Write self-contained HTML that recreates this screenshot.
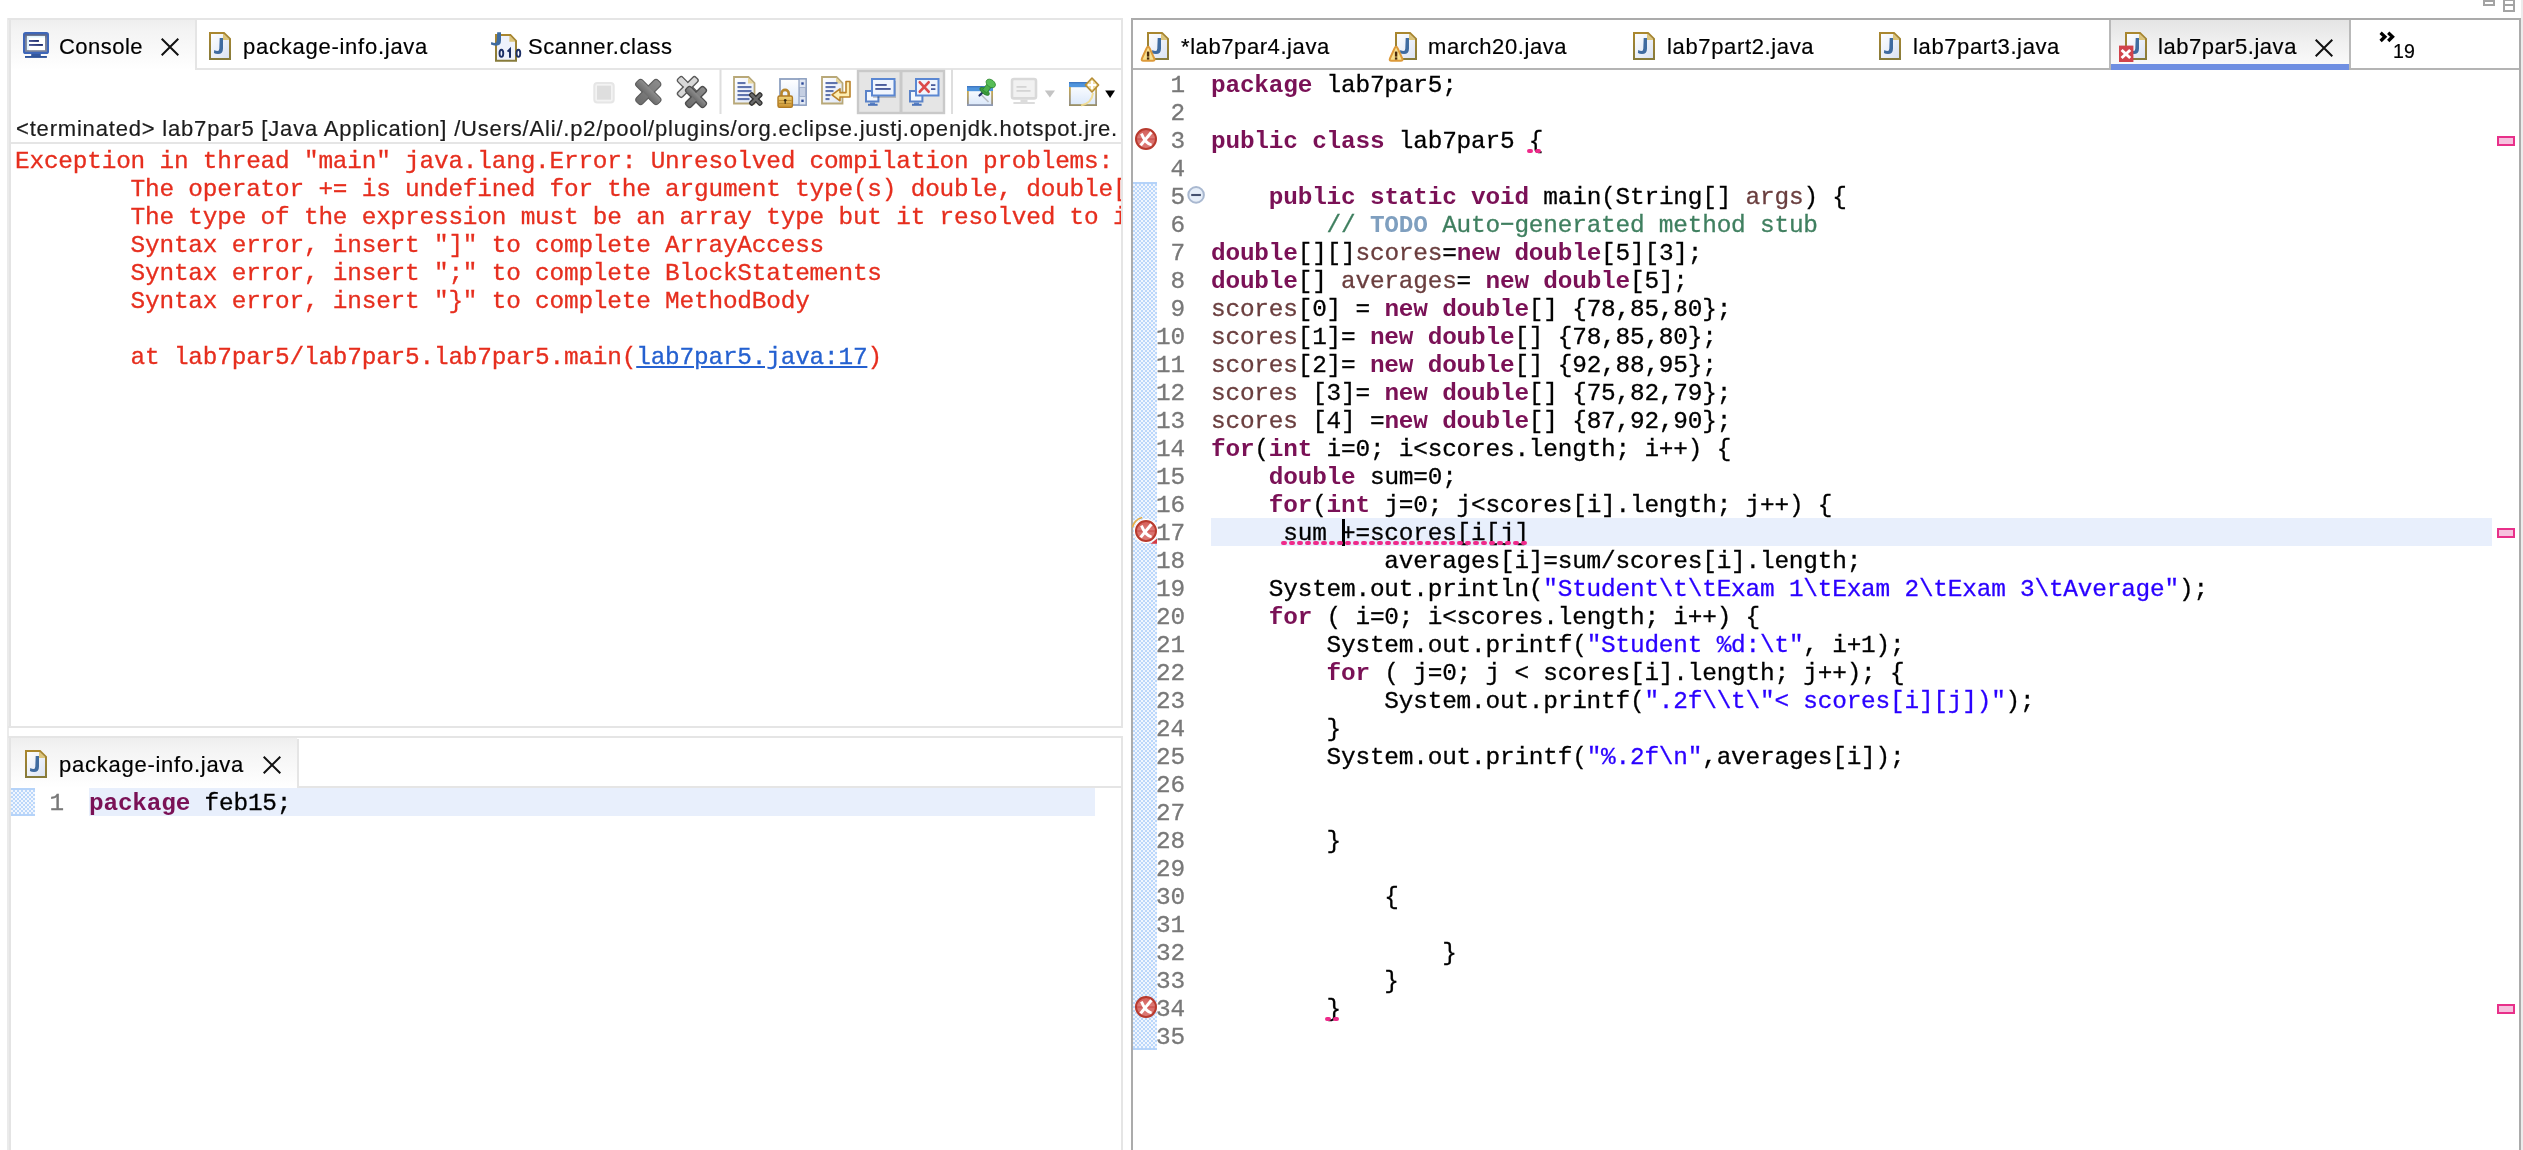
<!DOCTYPE html><html lang="en"><head><meta charset="utf-8"><title>Eclipse</title>
<style>
html,body{margin:0;padding:0;background:#fff;}
body{width:2523px;height:1150px;position:relative;overflow:hidden;font-family:"Liberation Sans",sans-serif;}
.ui,.mono{-webkit-font-smoothing:antialiased;will-change:transform;}
.ui{position:absolute;white-space:pre;font-family:"Liberation Sans",sans-serif;line-height:normal;-webkit-text-stroke:0.2px;}
.b{position:absolute;}
.mono{position:absolute;white-space:pre;font-family:"Liberation Mono",monospace;font-size:24.4px;letter-spacing:-0.19px;line-height:28px;height:28px;margin-top:2px;-webkit-text-stroke:0.3px;}
.k{color:#7a1156;font-weight:bold;-webkit-text-stroke:0;}
.v{color:#6a3e3e;}
.c{color:#3f7f5f;}
.t{color:#7f9fbf;font-weight:bold;-webkit-text-stroke:0;}
.s{color:#2a00ff;}
.ln{color:#787878;text-align:right;}
.con{color:#e62e1e;}
.lk{color:#2561d0;text-decoration:underline;}
</style></head><body>

<div class="b" style="left:7px;top:18px;width:2px;height:1132px;background:#ebebeb"></div>
<div class="b" style="left:9px;top:18px;width:2px;height:710px;background:#e4e4e4"></div>
<div class="b" style="left:9px;top:736px;width:2px;height:414px;background:#e4e4e4"></div>
<div class="b" style="left:8px;top:18px;width:1115px;height:2px;background:#e5e5e5"></div>
<div class="b" style="left:1121px;top:18px;width:2px;height:710px;background:#e5e5e5"></div>
<div class="b" style="left:8px;top:726px;width:1115px;height:2px;background:#e5e5e5"></div>
<div class="b" style="left:11px;top:20px;width:184px;height:50px;background:linear-gradient(180deg,#eeeeee 0%,#f3f3f3 18%,#f9f9f9 60%,#ffffff 100%)"></div>
<div class="b" style="left:195px;top:20px;width:2px;height:50px;background:#e5e5e5"></div>
<div class="b" style="left:195px;top:68px;width:926px;height:2px;background:#e5e5e5"></div>
<div class="b" style="left:11px;top:142px;width:1110px;height:2px;background:#e5e5e5"></div>
<div class="b" style="left:8px;top:736px;width:1115px;height:2px;background:#e5e5e5"></div>
<div class="b" style="left:1121px;top:736px;width:2px;height:414px;background:#e5e5e5"></div>
<div class="b" style="left:11px;top:738px;width:286px;height:50px;background:linear-gradient(180deg,#eeeeee 0%,#f3f3f3 18%,#f9f9f9 60%,#ffffff 100%)"></div>
<div class="b" style="left:297px;top:739px;width:2px;height:48px;background:#e5e5e5"></div>
<div class="b" style="left:297px;top:786px;width:824px;height:2px;background:#e5e5e5"></div>
<div class="b" style="left:1131px;top:18px;width:2px;height:1132px;background:#ababab"></div>
<div class="b" style="left:1131px;top:18px;width:1390px;height:2px;background:#ababab"></div>
<div class="b" style="left:2519px;top:18px;width:2px;height:1132px;background:#ababab"></div>
<div class="b" style="left:1133px;top:68px;width:1386px;height:2px;background:#b4b4b4"></div>
<div class="b" style="left:2109px;top:20px;width:242px;height:48px;background:linear-gradient(180deg,#e4e4e4 0%,#f1f1f1 50%,#fbfbfb 100%);border-left:2px solid #b9b9b9;border-right:2px solid #b9b9b9;box-sizing:border-box"></div>
<div class="b" style="left:2111px;top:64px;width:238px;height:6px;background:#6f8fe2"></div>
<div class="b" style="left:2483px;top:-0.4px;width:12px;height:6px;border:2px solid #a3a3a3;box-sizing:border-box;background:#fff"></div>
<div class="b" style="left:2503px;top:-0.6px;width:12px;height:12.4px;border:2px solid #a3a3a3;box-sizing:border-box;background:#fff"></div>
<div class="b" style="left:2503px;top:3.6px;width:12px;height:2px;background:#a3a3a3"></div>
<div class="b" style="left:2521px;top:0;width:2px;height:1150px;background:#ececec"></div>
<svg style="position:absolute;left:23px;top:32px" width="27" height="27" viewBox="0 0 27 27">
<defs><linearGradient id="cl" x1="0" y1="0" x2="1" y2="0"><stop offset="0" stop-color="#4a5596"/><stop offset="1" stop-color="#1c2a6a"/></linearGradient>
<linearGradient id="cb" x1="0" y1="0" x2="0" y2="1"><stop offset="0" stop-color="#5d6582"/><stop offset="0.25" stop-color="#7b8296"/><stop offset="1" stop-color="#7f869a"/></linearGradient></defs>
<rect x="0" y="0" width="26" height="22" rx="2.6" fill="#3e66b8"/>
<rect x="2.1" y="2.3" width="21.8" height="17.5" fill="url(#cb)"/>
<rect x="3.9" y="3.9" width="18.1" height="14.2" fill="#dff4ff"/>
<rect x="5.7" y="5.5" width="16.3" height="12.6" fill="#ffffff"/>
<rect x="6" y="8" width="9.9" height="1.9" fill="url(#cl)"/><rect x="6" y="12" width="13.9" height="1.9" fill="url(#cl)"/>
<rect x="8.2" y="21.9" width="9.6" height="2.2" fill="#35589e"/><rect x="2" y="24" width="21.9" height="1.9" fill="#2d5299"/>
</svg>
<div class="ui" style="left:58.8px;top:33.59px;font-size:22px;letter-spacing:0.47px;color:#000;">Console</div>
<svg style="position:absolute;left:161px;top:38px" width="18" height="18" viewBox="0 0 18 18"><path d="M0.7 0.7 L17.3 17.3 M17.3 0.7 L0.7 17.3" stroke="#111" stroke-width="2" fill="none"/></svg>
<svg style="position:absolute;left:209px;top:32px;overflow:visible" width="22" height="28" viewBox="0 0 22 28">
<defs><linearGradient id="jg" x1="0" y1="0" x2="1" y2="1"><stop offset="0" stop-color="#ffffff"/><stop offset="1" stop-color="#d9e2f3"/></linearGradient><linearGradient id="jb" x1="0" y1="0" x2="0" y2="1"><stop offset="0" stop-color="#aa872f"/><stop offset="1" stop-color="#877b3b"/></linearGradient></defs>
<path d="M1 1 H15 L21 6.8 V27 H1 Z" fill="url(#jg)" stroke="url(#jb)" stroke-width="2" stroke-linejoin="miter"/>
<path d="M14 2 V8 H20 V7.2 L14.6 2 Z" fill="#dcc47a" stroke="none"/>
<path d="M10.7 6 H14 V16.4 Q14 21.9 9 21.9 Q6.5 21.9 4.9 21 L5.3 18.1 Q7 19 8.5 19 Q10.3 19 10.3 16.4 Z" fill="#3f6ba0"/>
</svg>
<div class="ui" style="left:242.8px;top:33.59px;font-size:22px;letter-spacing:0.744px;color:#000;">package-info.java</div>
<svg style="position:absolute;left:491px;top:30px;overflow:visible" width="32" height="32" viewBox="0 0 32 32">
<path d="M5 5 H19.4 L25 10.8 V30.8 H5 Z" fill="#eef2fb" stroke="url(#jb)" stroke-width="2"/>
<path d="M18.4 6 V11.8 H24 V11.2 L19 6 Z" fill="#dcc47a"/>
<path d="M6.2 2.2 H10 V10.5 Q10 15.7 5 15.7 Q2 15.7 -0.1 14.6 L0.3 11.9 Q2.4 12.9 4.2 12.9 Q5.7 12.9 5.7 10.5 Z" fill="#3f6ba0"/>
<ellipse cx="10.4" cy="23.3" rx="1.85" ry="3.55" fill="none" stroke="#1c2f66" stroke-width="1.9"/><ellipse cx="27.4" cy="23.3" rx="1.85" ry="3.55" fill="none" stroke="#1c2f66" stroke-width="1.9"/><path d="M16.6 21.6 L19 19.2 V27.7" fill="none" stroke="#1c2f66" stroke-width="2"/>
</svg>
<div class="ui" style="left:528.3px;top:33.59px;font-size:22px;letter-spacing:0.587px;color:#000;">Scanner.class</div>
<svg style="position:absolute;left:580px;top:66px;overflow:visible" width="545" height="52" viewBox="0 0 545 52"><defs>
<linearGradient id="docg" x1="0" y1="0" x2="1" y2="1"><stop offset="0" stop-color="#ffffff"/><stop offset="1" stop-color="#dfe7f6"/></linearGradient>
<linearGradient id="wing" x1="0" y1="0" x2="0" y2="1"><stop offset="0" stop-color="#ffffff"/><stop offset="1" stop-color="#dbe8fa"/></linearGradient>
<linearGradient id="goldside" x1="0" y1="0" x2="0" y2="1"><stop offset="0" stop-color="#c9a94e"/><stop offset="1" stop-color="#8d8f96"/></linearGradient>
<linearGradient id="lockg" x1="0" y1="0" x2="0" y2="1"><stop offset="0" stop-color="#f3d67a"/><stop offset="1" stop-color="#c98f2d"/></linearGradient>
<linearGradient id="xg" x1="0" y1="0" x2="0" y2="1"><stop offset="0" stop-color="#8c8c8c"/><stop offset="1" stop-color="#6c6c6c"/></linearGradient>
</defs><rect x="14.299999999999955" y="17" width="19.4" height="19.4" fill="#f3f3f3" stroke="#e6e6e6" stroke-width="2" rx="3" /><rect x="17" y="19.700000000000003" width="14" height="14" fill="#dedede" /><g transform="translate(68.29999999999995,26) rotate(45)"><rect x="-15.2" y="-4.3" width="30.4" height="8.6" rx="3.01" fill="url(#xg)" stroke="#5e5e5e" stroke-width="1.2"/><rect x="-4.3" y="-15.2" width="8.6" height="30.4" rx="3.01" fill="url(#xg)" stroke="#5e5e5e" stroke-width="1.2"/><rect x="-14.6" y="-3.6999999999999997" width="29.2" height="7.3999999999999995" rx="2.5799999999999996" fill="url(#xg)"/></g><g transform="translate(107.79999999999995,21) rotate(45)"><rect x="-12.6" y="-3.3" width="25.2" height="6.6" rx="2.3099999999999996" fill="#d8d8d8" stroke="#5a5a5a" stroke-width="1.4"/><rect x="-3.3" y="-12.6" width="6.6" height="25.2" rx="2.3099999999999996" fill="#d8d8d8" stroke="#5a5a5a" stroke-width="1.4"/><rect x="-11.9" y="-2.5999999999999996" width="23.8" height="5.199999999999999" rx="1.9799999999999998" fill="#d8d8d8"/></g><g transform="translate(116,31) rotate(45)"><rect x="-12.6" y="-3.4" width="25.2" height="6.8" rx="2.38" fill="url(#xg)" stroke="#4e4e4e" stroke-width="1.4"/><rect x="-3.4" y="-12.6" width="6.8" height="25.2" rx="2.38" fill="url(#xg)" stroke="#4e4e4e" stroke-width="1.4"/><rect x="-11.9" y="-2.7" width="23.8" height="5.4" rx="2.04" fill="url(#xg)"/></g><rect x="139.5" y="3.5" width="2" height="44.5" fill="#dedede" /><rect x="371" y="3.5" width="2" height="44.5" fill="#dedede" /><path d="M154 11 h14.5 l6 6 v20.5 h-20.5 z" fill="url(#docg)" stroke="#b8a878" stroke-width="1.8"/><path d="M168 11.5 v6 h6 z" fill="#e6d59a"/><rect x="157.5" y="16" width="8" height="2.1" fill="#5f74ad" /><rect x="157.5" y="20" width="14" height="2.1" fill="#5f74ad" /><rect x="157.5" y="24" width="14" height="2.1" fill="#5f74ad" /><rect x="157.5" y="28" width="14" height="2.1" fill="#5f74ad" /><rect x="157.5" y="32" width="12" height="2.1" fill="#5f74ad" /><g transform="translate(175.79999999999995,33) rotate(45)"><rect x="-7.6" y="-1.9" width="15.2" height="3.8" rx="1.3299999999999998" fill="#6a6a6a" stroke="#333" stroke-width="1.4"/><rect x="-1.9" y="-7.6" width="3.8" height="15.2" rx="1.3299999999999998" fill="#6a6a6a" stroke="#333" stroke-width="1.4"/><rect x="-6.8999999999999995" y="-1.2" width="13.799999999999999" height="2.4" rx="1.14" fill="#6a6a6a"/></g><rect x="200" y="13" width="26" height="26" fill="url(#wing)" stroke="#8ea0c0" stroke-width="1.8" /><rect x="219" y="13" width="7" height="26" fill="#dfe6f2" stroke="#8ea0c0" stroke-width="1.2" /><rect x="219.60000000000002" y="21.5" width="5.8" height="9" fill="#c5cfe2" stroke="#9aa8c4" stroke-width="0.8" /><rect x="221.29999999999995" y="16.299999999999997" width="2.4" height="2.4" fill="#2d4a9a" /><rect x="221.29999999999995" y="33.599999999999994" width="2.4" height="2.4" fill="#2d4a9a" /><path d="M201.5 30 v-2.5 a3.6 3.6 0 0 1 7.2 0 v2.5" fill="none" stroke="#b8862c" stroke-width="2.6"/><rect x="198" y="30" width="14.4" height="11.4" fill="url(#lockg)" stroke="#b07a22" stroke-width="1.4" rx="1.6" /><rect x="198.79999999999995" y="34" width="12.8" height="0.9" fill="#b98a30" /><rect x="198.79999999999995" y="37" width="12.8" height="0.9" fill="#b98a30" /><circle cx="205.20000000000005" cy="34.2" r="1.3" fill="#3a2a10"/><rect x="204.60000000000002" y="34.2" width="1.2" height="3.6" fill="#3a2a10" /><path d="M242 11 h14.5 l6 6 v20.5 h-20.5 z" fill="url(#docg)" stroke="#b8a878" stroke-width="1.8"/><path d="M256 11.5 v6 h6 z" fill="#e6d59a"/><rect x="245.5" y="16" width="12" height="2.1" fill="#5f74ad" /><rect x="245.5" y="20" width="10" height="2.1" fill="#5f74ad" /><rect x="245.5" y="24" width="8" height="2.1" fill="#5f74ad" /><rect x="245.5" y="28" width="5" height="2.1" fill="#5f74ad" /><rect x="245.5" y="32" width="4" height="2.1" fill="#5f74ad" /><path d="M266 15.5 h4 v15.5 h-10 v3.8 l-8 -6 l8 -6 v3.8 h6 v-11.1 z" fill="#fdeeb4" stroke="#b9822a" stroke-width="1.6" stroke-linejoin="round"/><rect x="278" y="5" width="86" height="42" fill="#e5e5e5" stroke="#c9c9c9" stroke-width="2.4" /><rect x="319.5" y="5" width="3" height="42" fill="#c9c9c9" /><rect x="286" y="25" width="12.4" height="10.5" fill="#f3f7fd" stroke="#5b83c8" stroke-width="2" /><rect x="290" y="36.5" width="5" height="1.6" fill="#5b83c8" /><rect x="288" y="37.8" width="9.6" height="2" fill="#4c74ba" /><rect x="293" y="15" width="23" height="17" fill="#000" opacity="0.18" filter="url(#bl)"/><rect x="292" y="13" width="22.5" height="16.5" fill="#f0f5fd" stroke="#5b87d2" stroke-width="2" /><rect x="295.29999999999995" y="18" width="11.4" height="1.9" fill="#4a5c9c" /><rect x="295.29999999999995" y="22" width="15.4" height="1.9" fill="#4a5c9c" /><rect x="330" y="25" width="12.4" height="10.5" fill="#f3f7fd" stroke="#5b83c8" stroke-width="2" /><rect x="334" y="36.5" width="5" height="1.6" fill="#5b83c8" /><rect x="332" y="37.8" width="9.6" height="2" fill="#4c74ba" /><rect x="336" y="13" width="22.5" height="16.5" fill="#f0f5fd" stroke="#5b87d2" stroke-width="2" /><path d="M339.79999999999995 16.299999999999997 l8.8 9.4 m0 -9.4 l-8.8 9.4" stroke="#dc4a4a" stroke-width="2.7" stroke-linecap="round"/><rect x="351" y="18.200000000000003" width="4.4" height="1.8" fill="#4a5c9c" /><rect x="351" y="22.200000000000003" width="4.4" height="1.8" fill="#4a5c9c" /><rect x="388" y="21" width="24" height="18" fill="url(#wing)" stroke="none" stroke-width="0" /><rect x="387" y="20" width="26" height="5.2" fill="#4f94dc" /><rect x="387" y="20" width="26" height="1.4" fill="#3f78c2" /><rect x="387" y="25" width="1.8" height="15" fill="url(#goldside)" /><rect x="411.20000000000005" y="25" width="1.8" height="15" fill="url(#goldside)" /><rect x="387" y="38.2" width="26" height="1.8" fill="#8f9bb5" /><path d="M400.5 28 l8 8" stroke="#b9bcc4" stroke-width="1.6"/><path d="M399.5 29.5 l4 -4" stroke="#1f2f6e" stroke-width="2.2" stroke-linecap="round"/><g transform="translate(408,21) rotate(38)"><ellipse cx="0" cy="5.5" rx="5.6" ry="2.6" fill="#3c9a3c" stroke="#2c7a2c" stroke-width="0.8"/><rect x="-2.6" y="-3.5" width="5.2" height="9" fill="#4bb04b" stroke="#2f8a2f" stroke-width="0.8"/><ellipse cx="0" cy="-4.5" rx="5.2" ry="3.6" fill="#57bd57" stroke="#2f8a2f" stroke-width="0.8"/></g><rect x="432" y="13" width="24" height="19.4" fill="#f1f1f1" stroke="#d9d9d9" stroke-width="2.6" rx="2" /><rect x="436.5" y="20" width="10" height="1.8" fill="#d4d4d4" /><rect x="436.5" y="24" width="14" height="1.8" fill="#d4d4d4" /><rect x="440.5" y="33.5" width="7" height="2.5" fill="#dcdcdc" /><rect x="433.4" y="36" width="21.4" height="2" fill="#dcdcdc" /><path d="M464.79999999999995 24.400000000000006 h10.2 l-5.1 7.2 z" fill="#c4c4c4"/><rect x="490" y="17" width="26" height="22" fill="url(#wing)" stroke="none" stroke-width="0" /><rect x="489" y="16" width="28" height="5.2" fill="#4f94dc" /><rect x="489" y="16" width="28" height="1.4" fill="#3f78c2" /><rect x="489" y="21" width="1.8" height="19" fill="url(#goldside)" /><rect x="515.2" y="21" width="1.8" height="19" fill="url(#goldside)" /><rect x="489" y="38.2" width="28" height="1.8" fill="#9a8f66" /><path d="M513 27 q-1 10 -12 12.5" fill="none" stroke="#f3dc8c" stroke-width="2" opacity="0.9"/><path d="M512 12 l6.6 7 l-6.6 7 l-6.6 -7 z" fill="#f1dea4" stroke="#b58c32" stroke-width="1.6" stroke-linejoin="round"/><path d="M512 15 v8 m-4 -4 h8" stroke="#fff" stroke-width="2"/><path d="M525.2 24.400000000000006 h9.8 l-4.9 7.6 z" fill="#000"/></svg>
<div class="ui" style="left:15.5px;top:116.09px;font-size:22px;letter-spacing:0.813px;color:#1c1c1c;width:1104px;overflow:hidden;">&lt;terminated&gt; lab7par5 [Java Application] /Users/Ali/.p2/pool/plugins/org.eclipse.justj.openjdk.hotspot.jre.</div>
<div class="b" style="left:11px;top:144px;width:1110px;height:582px;overflow:hidden">
<div class="mono con" style="left:4px;top:2px">Exception in thread "main" java.lang.Error: Unresolved compilation problems: </div>
<div class="mono con" style="left:4px;top:30px">        The operator += is undefined for the argument type(s) double, double[]</div>
<div class="mono con" style="left:4px;top:58px">        The type of the expression must be an array type but it resolved to int</div>
<div class="mono con" style="left:4px;top:86px">        Syntax error, insert "]" to complete ArrayAccess</div>
<div class="mono con" style="left:4px;top:114px">        Syntax error, insert ";" to complete BlockStatements</div>
<div class="mono con" style="left:4px;top:142px">        Syntax error, insert "}" to complete MethodBody</div>
<div class="mono con" style="left:4px;top:170px"></div>
<div class="mono con" style="left:4px;top:198px">        at lab7par5/lab7par5.lab7par5.main(<span class="lk">lab7par5.java:17</span>)</div>
</div>
<svg style="position:absolute;left:25px;top:750px;overflow:visible" width="22" height="28" viewBox="0 0 22 28">
<defs><linearGradient id="jg" x1="0" y1="0" x2="1" y2="1"><stop offset="0" stop-color="#ffffff"/><stop offset="1" stop-color="#d9e2f3"/></linearGradient><linearGradient id="jb" x1="0" y1="0" x2="0" y2="1"><stop offset="0" stop-color="#aa872f"/><stop offset="1" stop-color="#877b3b"/></linearGradient></defs>
<path d="M1 1 H15 L21 6.8 V27 H1 Z" fill="url(#jg)" stroke="url(#jb)" stroke-width="2" stroke-linejoin="miter"/>
<path d="M14 2 V8 H20 V7.2 L14.6 2 Z" fill="#dcc47a" stroke="none"/>
<path d="M10.7 6 H14 V16.4 Q14 21.9 9 21.9 Q6.5 21.9 4.9 21 L5.3 18.1 Q7 19 8.5 19 Q10.3 19 10.3 16.4 Z" fill="#3f6ba0"/>
</svg>
<div class="ui" style="left:58.8px;top:751.89px;font-size:22px;letter-spacing:0.744px;color:#000;">package-info.java</div>
<svg style="position:absolute;left:263px;top:756px" width="18" height="18" viewBox="0 0 18 18"><path d="M0.7 0.7 L17.3 17.3 M17.3 0.7 L0.7 17.3" stroke="#111" stroke-width="2" fill="none"/></svg>
<div class="b" style="left:89px;top:788px;width:1006px;height:28px;background:#e8effc"></div>
<div class="b qd" style="left:11px;top:788px;width:24px;height:28px"></div><div class="b" style="left:11px;top:814px;width:24px;height:2px;background:#b5d3f9"></div><div class="b" style="left:11px;top:788px;width:24px;height:2px;background:#b5d3f9"></div>
<div class="mono ln" style="left:20px;top:788px;width:44px">1</div>
<div class="mono" style="left:89px;top:788px"><span class="k">package</span> feb15;</div>
<svg style="position:absolute;left:1147px;top:32px;overflow:visible" width="22" height="28" viewBox="0 0 22 28">
<defs><linearGradient id="jg" x1="0" y1="0" x2="1" y2="1"><stop offset="0" stop-color="#ffffff"/><stop offset="1" stop-color="#d9e2f3"/></linearGradient><linearGradient id="jb" x1="0" y1="0" x2="0" y2="1"><stop offset="0" stop-color="#aa872f"/><stop offset="1" stop-color="#877b3b"/></linearGradient></defs>
<path d="M1 1 H15 L21 6.8 V27 H1 Z" fill="url(#jg)" stroke="url(#jb)" stroke-width="2" stroke-linejoin="miter"/>
<path d="M14 2 V8 H20 V7.2 L14.6 2 Z" fill="#dcc47a" stroke="none"/>
<path d="M10.7 6 H14 V16.4 Q14 21.9 9 21.9 Q6.5 21.9 4.9 21 L5.3 18.1 Q7 19 8.5 19 Q10.3 19 10.3 16.4 Z" fill="#3f6ba0"/>
<path d="M-0.6 16.6 Q1.1 13 2.8 16.6 L7.2 26.4 Q8.2 28.8 5.8 28.8 L-3.6 28.8 Q-6 28.8 -5 26.4 Z" fill="#f8e08e" stroke="#dd9a3a" stroke-width="2" stroke-linejoin="round"/>
<rect x="-0.1" y="19.6" width="2.4" height="5" fill="#4a2a0a"/><rect x="-0.1" y="25.4" width="2.4" height="2.2" fill="#4a2a0a"/></svg>
<div class="ui" style="left:1180.8px;top:33.59px;font-size:22px;letter-spacing:0.581px;color:#000;">*lab7par4.java</div>
<svg style="position:absolute;left:1395px;top:32px;overflow:visible" width="22" height="28" viewBox="0 0 22 28">
<defs><linearGradient id="jg" x1="0" y1="0" x2="1" y2="1"><stop offset="0" stop-color="#ffffff"/><stop offset="1" stop-color="#d9e2f3"/></linearGradient><linearGradient id="jb" x1="0" y1="0" x2="0" y2="1"><stop offset="0" stop-color="#aa872f"/><stop offset="1" stop-color="#877b3b"/></linearGradient></defs>
<path d="M1 1 H15 L21 6.8 V27 H1 Z" fill="url(#jg)" stroke="url(#jb)" stroke-width="2" stroke-linejoin="miter"/>
<path d="M14 2 V8 H20 V7.2 L14.6 2 Z" fill="#dcc47a" stroke="none"/>
<path d="M10.7 6 H14 V16.4 Q14 21.9 9 21.9 Q6.5 21.9 4.9 21 L5.3 18.1 Q7 19 8.5 19 Q10.3 19 10.3 16.4 Z" fill="#3f6ba0"/>
<path d="M-0.6 16.6 Q1.1 13 2.8 16.6 L7.2 26.4 Q8.2 28.8 5.8 28.8 L-3.6 28.8 Q-6 28.8 -5 26.4 Z" fill="#f8e08e" stroke="#dd9a3a" stroke-width="2" stroke-linejoin="round"/>
<rect x="-0.1" y="19.6" width="2.4" height="5" fill="#4a2a0a"/><rect x="-0.1" y="25.4" width="2.4" height="2.2" fill="#4a2a0a"/></svg>
<div class="ui" style="left:1428.3px;top:33.59px;font-size:22px;letter-spacing:0.593px;color:#000;">march20.java</div>
<svg style="position:absolute;left:1633px;top:32px;overflow:visible" width="22" height="28" viewBox="0 0 22 28">
<defs><linearGradient id="jg" x1="0" y1="0" x2="1" y2="1"><stop offset="0" stop-color="#ffffff"/><stop offset="1" stop-color="#d9e2f3"/></linearGradient><linearGradient id="jb" x1="0" y1="0" x2="0" y2="1"><stop offset="0" stop-color="#aa872f"/><stop offset="1" stop-color="#877b3b"/></linearGradient></defs>
<path d="M1 1 H15 L21 6.8 V27 H1 Z" fill="url(#jg)" stroke="url(#jb)" stroke-width="2" stroke-linejoin="miter"/>
<path d="M14 2 V8 H20 V7.2 L14.6 2 Z" fill="#dcc47a" stroke="none"/>
<path d="M10.7 6 H14 V16.4 Q14 21.9 9 21.9 Q6.5 21.9 4.9 21 L5.3 18.1 Q7 19 8.5 19 Q10.3 19 10.3 16.4 Z" fill="#3f6ba0"/>
</svg>
<div class="ui" style="left:1666.6px;top:33.59px;font-size:22px;letter-spacing:0.642px;color:#000;">lab7part2.java</div>
<svg style="position:absolute;left:1879px;top:32px;overflow:visible" width="22" height="28" viewBox="0 0 22 28">
<defs><linearGradient id="jg" x1="0" y1="0" x2="1" y2="1"><stop offset="0" stop-color="#ffffff"/><stop offset="1" stop-color="#d9e2f3"/></linearGradient><linearGradient id="jb" x1="0" y1="0" x2="0" y2="1"><stop offset="0" stop-color="#aa872f"/><stop offset="1" stop-color="#877b3b"/></linearGradient></defs>
<path d="M1 1 H15 L21 6.8 V27 H1 Z" fill="url(#jg)" stroke="url(#jb)" stroke-width="2" stroke-linejoin="miter"/>
<path d="M14 2 V8 H20 V7.2 L14.6 2 Z" fill="#dcc47a" stroke="none"/>
<path d="M10.7 6 H14 V16.4 Q14 21.9 9 21.9 Q6.5 21.9 4.9 21 L5.3 18.1 Q7 19 8.5 19 Q10.3 19 10.3 16.4 Z" fill="#3f6ba0"/>
</svg>
<div class="ui" style="left:1913.0px;top:33.59px;font-size:22px;letter-spacing:0.627px;color:#000;">lab7part3.java</div>
<svg style="position:absolute;left:2125px;top:32px;overflow:visible" width="22" height="28" viewBox="0 0 22 28">
<defs><linearGradient id="jg" x1="0" y1="0" x2="1" y2="1"><stop offset="0" stop-color="#ffffff"/><stop offset="1" stop-color="#d9e2f3"/></linearGradient><linearGradient id="jb" x1="0" y1="0" x2="0" y2="1"><stop offset="0" stop-color="#aa872f"/><stop offset="1" stop-color="#877b3b"/></linearGradient></defs>
<path d="M1 1 H15 L21 6.8 V27 H1 Z" fill="url(#jg)" stroke="url(#jb)" stroke-width="2" stroke-linejoin="miter"/>
<path d="M14 2 V8 H20 V7.2 L14.6 2 Z" fill="#dcc47a" stroke="none"/>
<path d="M10.7 6 H14 V16.4 Q14 21.9 9 21.9 Q6.5 21.9 4.9 21 L5.3 18.1 Q7 19 8.5 19 Q10.3 19 10.3 16.4 Z" fill="#3f6ba0"/>
<rect x="-6" y="13.6" width="14.4" height="16.4" fill="#d1434b"/><path d="M-3.4 18 L5.2 26 M5.2 18 L-3.4 26" stroke="#fff" stroke-width="3"/></svg>
<div class="ui" style="left:2158.3px;top:33.59px;font-size:22px;letter-spacing:0.522px;color:#000;">lab7par5.java</div>
<svg style="position:absolute;left:2315px;top:39px" width="18" height="18" viewBox="0 0 18 18"><path d="M0.7 0.7 L17.3 17.3 M17.3 0.7 L0.7 17.3" stroke="#111" stroke-width="2" fill="none"/></svg>
<svg style="position:absolute;left:2378px;top:30px" width="20" height="14" viewBox="0 0 20 14"><path d="M2.6 2.8 L6.9 6.8 L2.6 11 M10.2 2.8 L14.5 6.8 L10.2 11" fill="none" stroke="#000" stroke-width="3.3" stroke-linejoin="miter"/></svg>
<div class="ui" style="left:2393px;top:40.06px;font-size:19.6px;letter-spacing:0px;color:#000;">19</div>
<div class="b qd" style="left:1133px;top:182px;width:24px;height:868px"></div>
<div class="b" style="left:1133px;top:1048px;width:24px;height:2px;background:#b5d3f9"></div>
<div class="b" style="left:1133px;top:182px;width:24px;height:2px;background:#b5d3f9"></div>
<div class="b" style="left:1211px;top:518px;width:1281px;height:28px;background:#e8effc"></div>
<div class="mono ln" style="left:1140px;top:70px;width:45px">1</div>
<div class="mono" style="left:1211px;top:70px"><span class="k">package</span> lab7par5;</div>
<div class="mono ln" style="left:1140px;top:98px;width:45px">2</div>
<div class="mono ln" style="left:1140px;top:126px;width:45px">3</div>
<div class="mono" style="left:1211px;top:126px"><span class="k">public</span> <span class="k">class</span> lab7par5 {</div>
<div class="mono ln" style="left:1140px;top:154px;width:45px">4</div>
<div class="mono ln" style="left:1140px;top:182px;width:45px">5</div>
<div class="mono" style="left:1211px;top:182px">    <span class="k">public</span> <span class="k">static</span> <span class="k">void</span> main(String[] <span class="v">args</span>) {</div>
<div class="mono ln" style="left:1140px;top:210px;width:45px">6</div>
<div class="mono" style="left:1211px;top:210px">        <span class="c">// </span><span class="t">TODO</span><span class="c"> Auto−generated method stub</span></div>
<div class="mono ln" style="left:1140px;top:238px;width:45px">7</div>
<div class="mono" style="left:1211px;top:238px"><span class="k">double</span>[][]<span class="v">scores</span>=<span class="k">new</span> <span class="k">double</span>[5][3];</div>
<div class="mono ln" style="left:1140px;top:266px;width:45px">8</div>
<div class="mono" style="left:1211px;top:266px"><span class="k">double</span>[] <span class="v">averages</span>= <span class="k">new</span> <span class="k">double</span>[5];</div>
<div class="mono ln" style="left:1140px;top:294px;width:45px">9</div>
<div class="mono" style="left:1211px;top:294px"><span class="v">scores</span>[0] = <span class="k">new</span> <span class="k">double</span>[] {78,85,80};</div>
<div class="mono ln" style="left:1140px;top:322px;width:45px">10</div>
<div class="mono" style="left:1211px;top:322px"><span class="v">scores</span>[1]= <span class="k">new</span> <span class="k">double</span>[] {78,85,80};</div>
<div class="mono ln" style="left:1140px;top:350px;width:45px">11</div>
<div class="mono" style="left:1211px;top:350px"><span class="v">scores</span>[2]= <span class="k">new</span> <span class="k">double</span>[] {92,88,95};</div>
<div class="mono ln" style="left:1140px;top:378px;width:45px">12</div>
<div class="mono" style="left:1211px;top:378px"><span class="v">scores</span> [3]= <span class="k">new</span> <span class="k">double</span>[] {75,82,79};</div>
<div class="mono ln" style="left:1140px;top:406px;width:45px">13</div>
<div class="mono" style="left:1211px;top:406px"><span class="v">scores</span> [4] =<span class="k">new</span> <span class="k">double</span>[] {87,92,90};</div>
<div class="mono ln" style="left:1140px;top:434px;width:45px">14</div>
<div class="mono" style="left:1211px;top:434px"><span class="k">for</span>(<span class="k">int</span> i=0; i&lt;scores.length; i++) {</div>
<div class="mono ln" style="left:1140px;top:462px;width:45px">15</div>
<div class="mono" style="left:1211px;top:462px">    <span class="k">double</span> sum=0;</div>
<div class="mono ln" style="left:1140px;top:490px;width:45px">16</div>
<div class="mono" style="left:1211px;top:490px">    <span class="k">for</span>(<span class="k">int</span> j=0; j&lt;scores[i].length; j++) {</div>
<div class="mono ln" style="left:1140px;top:518px;width:45px">17</div>
<div class="mono" style="left:1211px;top:518px">     sum +=scores[i[j]</div>
<div class="mono ln" style="left:1140px;top:546px;width:45px">18</div>
<div class="mono" style="left:1211px;top:546px">            averages[i]=sum/scores[i].length;</div>
<div class="mono ln" style="left:1140px;top:574px;width:45px">19</div>
<div class="mono" style="left:1211px;top:574px">    System.out.println(<span class="s">"Student\t\tExam 1\tExam 2\tExam 3\tAverage"</span>);</div>
<div class="mono ln" style="left:1140px;top:602px;width:45px">20</div>
<div class="mono" style="left:1211px;top:602px">    <span class="k">for</span> ( i=0; i&lt;scores.length; i++) {</div>
<div class="mono ln" style="left:1140px;top:630px;width:45px">21</div>
<div class="mono" style="left:1211px;top:630px">        System.out.printf(<span class="s">"Student %d:\t"</span>, i+1);</div>
<div class="mono ln" style="left:1140px;top:658px;width:45px">22</div>
<div class="mono" style="left:1211px;top:658px">        <span class="k">for</span> ( j=0; j &lt; scores[i].length; j++); {</div>
<div class="mono ln" style="left:1140px;top:686px;width:45px">23</div>
<div class="mono" style="left:1211px;top:686px">            System.out.printf(<span class="s">".2f\\t\"&lt; scores[i][j])"</span>);</div>
<div class="mono ln" style="left:1140px;top:714px;width:45px">24</div>
<div class="mono" style="left:1211px;top:714px">        }</div>
<div class="mono ln" style="left:1140px;top:742px;width:45px">25</div>
<div class="mono" style="left:1211px;top:742px">        System.out.printf(<span class="s">"%.2f\n"</span>,averages[i]);</div>
<div class="mono ln" style="left:1140px;top:770px;width:45px">26</div>
<div class="mono ln" style="left:1140px;top:798px;width:45px">27</div>
<div class="mono ln" style="left:1140px;top:826px;width:45px">28</div>
<div class="mono" style="left:1211px;top:826px">        }</div>
<div class="mono ln" style="left:1140px;top:854px;width:45px">29</div>
<div class="mono ln" style="left:1140px;top:882px;width:45px">30</div>
<div class="mono" style="left:1211px;top:882px">            {</div>
<div class="mono ln" style="left:1140px;top:910px;width:45px">31</div>
<div class="mono ln" style="left:1140px;top:938px;width:45px">32</div>
<div class="mono" style="left:1211px;top:938px">                }</div>
<div class="mono ln" style="left:1140px;top:966px;width:45px">33</div>
<div class="mono" style="left:1211px;top:966px">            }</div>
<div class="mono ln" style="left:1140px;top:994px;width:45px">34</div>
<div class="mono" style="left:1211px;top:994px">        }</div>
<div class="mono ln" style="left:1140px;top:1022px;width:45px">35</div>
<svg style="position:absolute;left:1134px;top:127px;overflow:visible" width="24" height="24" viewBox="0 0 24 24">
<defs><linearGradient id="eg" x1="0" y1="0" x2="0" y2="1"><stop offset="0" stop-color="#d35b56"/><stop offset="0.44" stop-color="#dc7a76"/><stop offset="0.5" stop-color="#c94c4a"/><stop offset="0.56" stop-color="#d96f6b"/><stop offset="1" stop-color="#dc7c78"/></linearGradient></defs>
<circle cx="12" cy="12" r="10" fill="url(#eg)" stroke="#b83a2e" stroke-width="2"/>
<path d="M17.4 5.2 L6.6 18.4" stroke="#fff" stroke-width="3" fill="none"/><path d="M7.4 6.6 Q11.5 16.5 17.6 18" stroke="#fff" stroke-width="2.8" fill="none"/></svg>
<svg style="position:absolute;left:1134px;top:519px;overflow:visible" width="24" height="24" viewBox="0 0 24 24">
<defs><linearGradient id="eg" x1="0" y1="0" x2="0" y2="1"><stop offset="0" stop-color="#d35b56"/><stop offset="0.44" stop-color="#dc7a76"/><stop offset="0.5" stop-color="#c94c4a"/><stop offset="0.56" stop-color="#d96f6b"/><stop offset="1" stop-color="#dc7c78"/></linearGradient></defs>
<path d="M-1.6 8.4 A14 14 0 0 1 8.2 -1.5" fill="none" stroke="#e8b048" stroke-width="1.7"/><path d="M23 19.4 V24.8 H16.6 Z" fill="#d43a44"/><circle cx="12" cy="12" r="12.2" fill="#fff"/><circle cx="12" cy="12" r="10" fill="url(#eg)" stroke="#b83a2e" stroke-width="2"/>
<path d="M17.4 5.2 L6.6 18.4" stroke="#fff" stroke-width="3" fill="none"/><path d="M7.4 6.6 Q11.5 16.5 17.6 18" stroke="#fff" stroke-width="2.8" fill="none"/></svg>
<svg style="position:absolute;left:1134px;top:995px;overflow:visible" width="24" height="24" viewBox="0 0 24 24">
<defs><linearGradient id="eg" x1="0" y1="0" x2="0" y2="1"><stop offset="0" stop-color="#d35b56"/><stop offset="0.44" stop-color="#dc7a76"/><stop offset="0.5" stop-color="#c94c4a"/><stop offset="0.56" stop-color="#d96f6b"/><stop offset="1" stop-color="#dc7c78"/></linearGradient></defs>
<circle cx="12" cy="12" r="10" fill="url(#eg)" stroke="#b83a2e" stroke-width="2"/>
<path d="M17.4 5.2 L6.6 18.4" stroke="#fff" stroke-width="3" fill="none"/><path d="M7.4 6.6 Q11.5 16.5 17.6 18" stroke="#fff" stroke-width="2.8" fill="none"/></svg>
<svg style="position:absolute;left:1187px;top:186px" width="18" height="18" viewBox="0 0 18 18"><circle cx="9.1" cy="8.9" r="7.8" fill="#e6eef8" stroke="#a9b8d0" stroke-width="2"/><path d="M4.2 9 H13.9" stroke="#44506e" stroke-width="2.1"/></svg>
<div class="b" style="left:1342px;top:519px;width:3px;height:27px;background:#000"></div>
<svg style="position:absolute;left:1527px;top:149px" width="16" height="4" viewBox="0 0 16 4"><path d="M2 2 H16" stroke="#ee2a8a" stroke-width="4" stroke-linecap="round" stroke-dasharray="2 6" fill="none"/></svg>
<svg style="position:absolute;left:1281px;top:541px" width="248" height="4" viewBox="0 0 248 4"><path d="M2 2 H248" stroke="#ee2a8a" stroke-width="4" stroke-linecap="round" stroke-dasharray="2 6" fill="none"/></svg>
<svg style="position:absolute;left:1325px;top:1017px" width="16" height="4" viewBox="0 0 16 4"><path d="M2 2 H16" stroke="#ee2a8a" stroke-width="4" stroke-linecap="round" stroke-dasharray="2 6" fill="none"/></svg>
<div class="b" style="left:2497px;top:136px;width:18px;height:10px;box-sizing:border-box;border:2px solid #e8308a;background:#f6c1de"></div>
<div class="b" style="left:2497px;top:528px;width:18px;height:10px;box-sizing:border-box;border:2px solid #e8308a;background:#f6c1de"></div>
<div class="b" style="left:2497px;top:1004px;width:18px;height:10px;box-sizing:border-box;border:2px solid #e8308a;background:#f6c1de"></div>
<style>.qd{background:conic-gradient(#bbd7fa 25%,#f1f6fe 0 50%,#bbd7fa 0 75%,#f1f6fe 0) 0 2px/4px 4px;}</style>
</body></html>
